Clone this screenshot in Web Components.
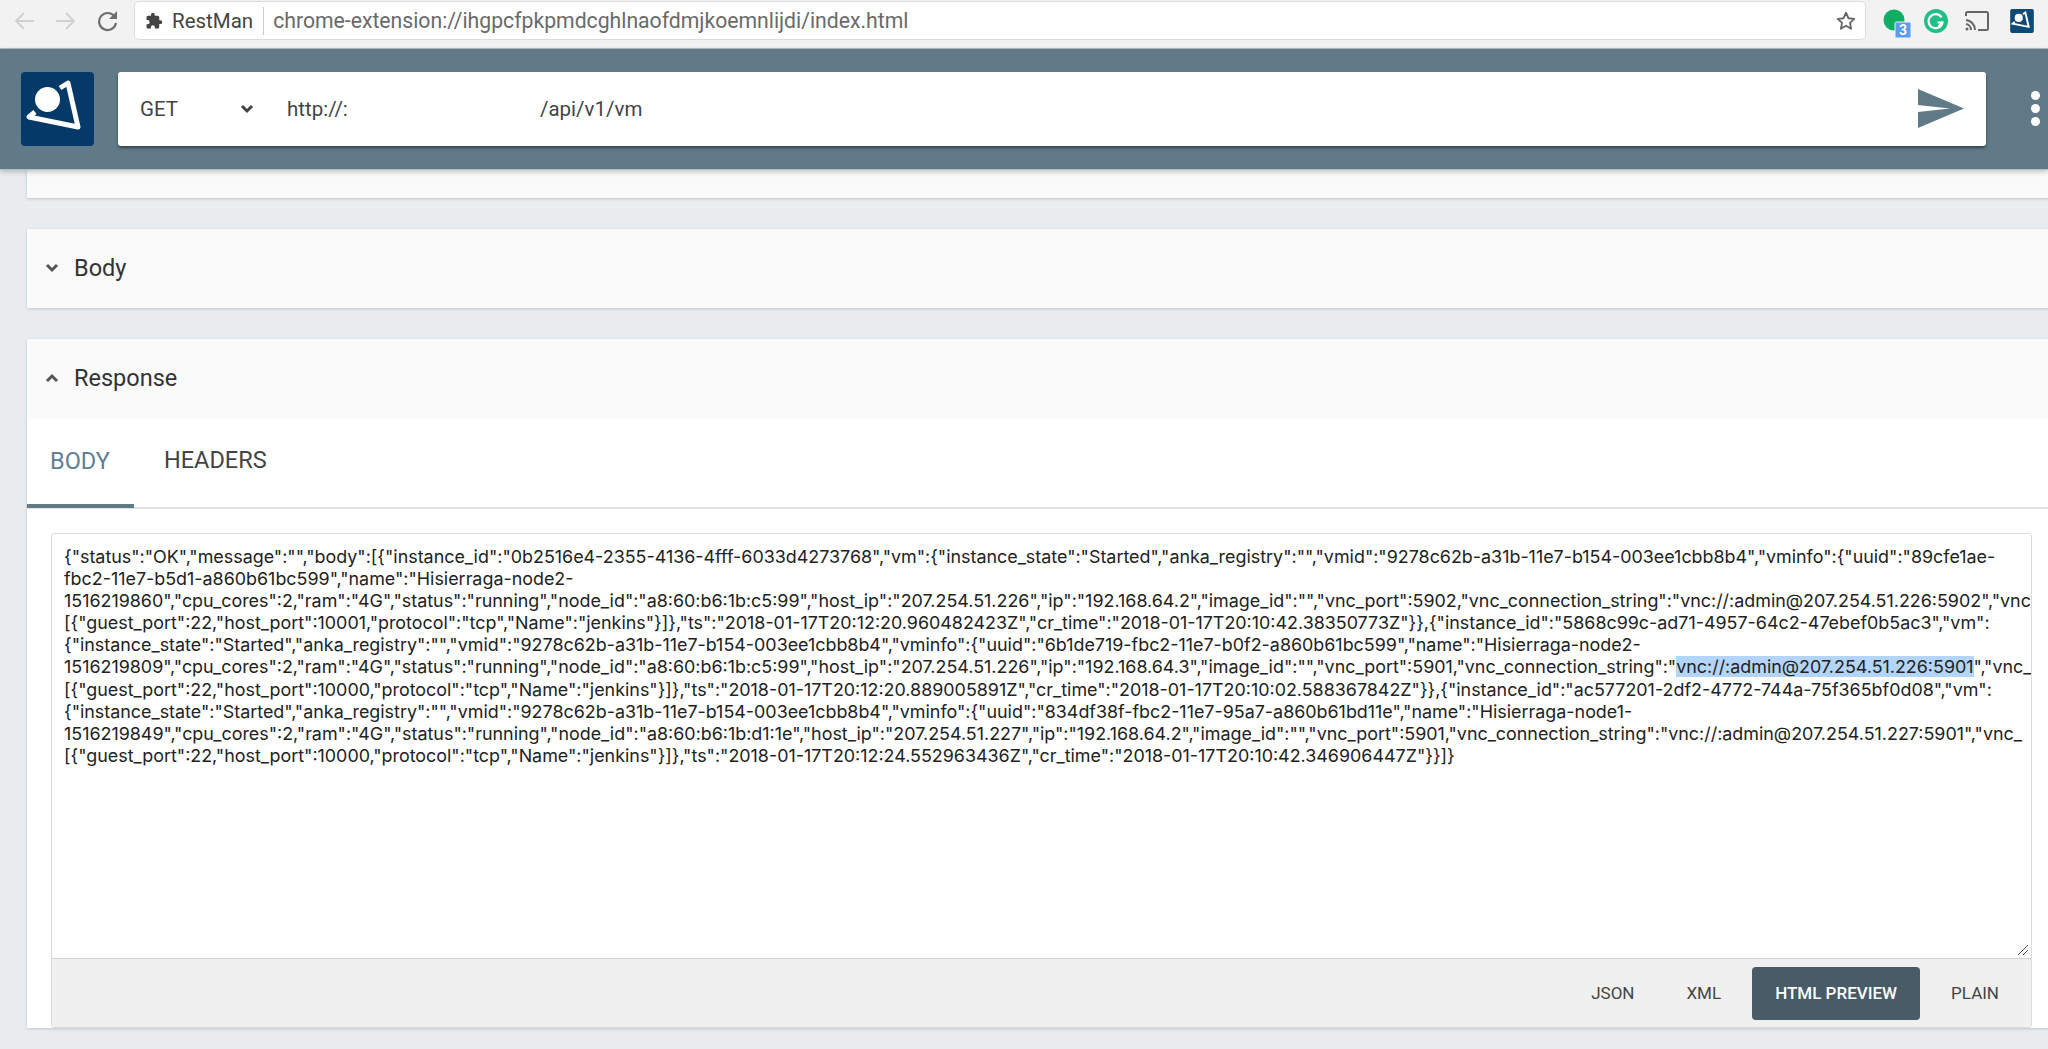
<!DOCTYPE html>
<html>
<head>
<meta charset="utf-8">
<style>
  html, body { margin: 0; height: 100%; overflow: hidden; }
  body { background: #e9edf0; font-family: Roboto, "Liberation Sans", sans-serif; color: #333; }
</style>
</head>
<body>
<browser-bar></browser-bar>
<app-bar></app-bar>
<main-area>
  <stub-panel></stub-panel>
  <fold-panel label="Body"></fold-panel>
  <fold-panel label="Response" opened>
    <response-view></response-view>
  </fold-panel>
</main-area>

<script>
class BrowserBar extends HTMLElement {
  constructor() {
    super();
    this.attachShadow({ mode: "open" });
    this.shadowRoot.innerHTML = `
      <style>
        :host { display: flex; align-items: center; height: 49px; padding-bottom: 7px; background: #f2f2f2; border-bottom: 1px solid #b9bdbf; box-sizing: border-box; }
        .nav { display: flex; align-items: center; width: 134px; flex: none; padding-left: 14px; box-sizing: border-box; gap: 22px; }
        .omni { flex: none; width: 1732px; height: 39px; box-sizing: border-box; background: #fff; border: 1px solid #dcdcdc; border-radius: 5px; display: flex; align-items: center; padding: 0 8px 0 10px; font-size: 20.500px; }
        .name { color: #444; margin-left: 9px; padding-right: 10px; border-right: 1px solid #ccc; line-height: 28px; }
        .url { color: #6a6a6a; margin-left: 9px; flex: 1; font-size: 21.200px; }
        .exts { display: flex; align-items: center; margin-left: 17px; gap: 14px; }
        svg { display: block; }
      </style>
      <div class="nav">
        <svg width="20" height="20" viewBox="0 0 20 20" fill="none" stroke="#d0d0d0" stroke-width="1.800"><path d="M20 10H2M10 2l-8 8 8 8"/></svg>
        <svg width="20" height="20" viewBox="0 0 20 20" fill="none" stroke="#d0d0d0" stroke-width="1.800"><path d="M0 10h18M10 2l8 8-8 8"/></svg>
        <svg width="21" height="22" viewBox="0 0 21 22" fill="none" stroke="#6e6e6e" stroke-width="2.200" style="margin-left:-1px"><path d="M17.500 6.500A8.500 8.500 0 1 0 19 13"/><path d="M20 1v8h-8z" fill="#6e6e6e" stroke="none"/></svg>
      </div>
      <div class="omni">
        <svg width="18" height="18" viewBox="0 0 24 24" fill="#444"><path d="M20.500 11H19V7a2 2 0 0 0-2-2h-4V3.500a2.500 2.500 0 0 0-5 0V5H4a2 2 0 0 0-2 2v3.800h1.500a2.700 2.700 0 0 1 0 5.400H2V20a2 2 0 0 0 2 2h3.800v-1.500a2.700 2.700 0 0 1 5.400 0V22H17a2 2 0 0 0 2-2v-4h1.500a2.500 2.500 0 0 0 0-5z"/></svg>
        <span class="name">RestMan</span>
        <span class="url">chrome-extension://ihgpcfpkpmdcghlnaofdmjkoemnlijdi/index.html</span>
        <svg width="22" height="22" viewBox="0 0 24 24" fill="none" stroke="#666" stroke-width="2" stroke-linejoin="round"><path d="M12 3l2.700 6 6.300.7-4.700 4.300 1.300 6.500L12 17.200 6.400 20.500 7.700 14 3 9.700 9.300 9z"/></svg>
      </div>
      <div class="exts">
        <svg width="30" height="30" viewBox="0 0 30 30" style="margin-top:6px"><circle cx="11" cy="11" r="10.500" fill="#0fae63"/><rect x="12" y="13" width="16" height="16" rx="1.500" fill="#5a9cf6" stroke="#f2f2f2"/><text x="20" y="26" font-family="Roboto, sans-serif" font-size="14" font-weight="700" fill="#fff" text-anchor="middle">3</text></svg>
        <svg width="24" height="24" viewBox="0 0 24 24" style="margin-left:-3px"><circle cx="12" cy="12" r="12" fill="#1fbf86"/><path d="M17.500 8.300A7 7 0 1 0 18.500 13.500H13.500" fill="none" stroke="#fff" stroke-width="2.200"/><path d="M14 18l4.500-5" stroke="#fff" stroke-width="2" fill="none"/></svg>
        <svg width="24" height="20" viewBox="0 0 24 20" fill="none" stroke="#666" stroke-width="2" style="margin-left:3px"><path d="M1 5V2.500A1.500 1.500 0 0 1 2.500 1H21.500A1.500 1.500 0 0 1 23 2.500V17.500A1.500 1.500 0 0 1 21.500 19H13"/><path d="M1 9a10 10 0 0 1 9 10M1 13a6 6 0 0 1 5 6"/><circle cx="2" cy="18" r="1.500" fill="#666" stroke="none"/></svg>
        <svg width="24" height="24" viewBox="0 0 73 74" style="margin-left:7px"><rect width="73" height="74" rx="6" fill="#0e4a78"/><circle cx="26.500" cy="27.500" r="12.500" fill="#fff"/><path d="M14 40L8 45L57 55L47 11L39 16" fill="none" stroke="#fff" stroke-width="6"/></svg>
      </div>
    `;
  }
}

class AppBar extends HTMLElement {
  constructor() {
    super();
    this.attachShadow({ mode: "open" });
    this.shadowRoot.innerHTML = `
      <style>
        :host { display: flex; position: relative; z-index: 2; align-items: center; height: 121px; background: #607a88; box-shadow: 0 2px 5px rgba(0,0,0,.22); padding: 0 0 1px 21px; box-sizing: border-box; border-bottom: 1px solid #b4bfc5; }
        .logo { flex: none; width: 73px; height: 74px; background: #053a68; border-radius: 4px; display: flex; }
        .field { flex: none; width: 1868px; height: 74px; margin-left: 24px; background: #fff; border-radius: 3px; box-shadow: 0 2px 3px rgba(0,0,0,.45); display: flex; align-items: center; font-size: 20.500px; color: #444; box-sizing: border-box; }
        .method { width: 120px; margin-left: 22px; display: flex; align-items: center; justify-content: space-between; padding-right: 6px; box-sizing: border-box; }
        .http { margin-left: 27px; width: 60px; overflow: hidden; white-space: nowrap; }
        .path { margin-left: 193px; flex: 1; }
        .send { margin-right: 22px; }
        .dots { display: flex; flex-direction: column; gap: 4px; margin-left: 45px; }
        .dots i { display: block; width: 9px; height: 9px; background: #fff; border-radius: 50%; }
        svg { display: block; }
      </style>
      <div class="logo">
        <svg width="73" height="74" viewBox="0 0 73 74">
          <circle cx="26.500" cy="27.500" r="12.500" fill="#fff"/>
          <path d="M14 40L8 45L57 55L47 11L39 16" fill="none" stroke="#fff" stroke-width="5" stroke-linejoin="round"/>
        </svg>
      </div>
      <div class="field">
        <div class="method"><span>GET</span><svg width="14" height="10" viewBox="0 0 14 10" fill="none" stroke="#444" stroke-width="3"><path d="M2 2l5 5 5-5"/></svg></div>
        <div class="http">http://:</div>
        <div class="path">/api/v1/vm</div>
        <svg class="send" width="46" height="39" viewBox="0 0 46 39" fill="#607a88"><path d="M0 0L46 19.500 0 39V23L32 19.500 0 16z"/></svg>
      </div>
      <div class="dots"><i></i><i></i><i></i></div>
    `;
  }
}

class MainArea extends HTMLElement {
  constructor() {
    super();
    this.attachShadow({ mode: "open" });
    this.shadowRoot.innerHTML = `
      <style>
        :host { display: flex; flex-direction: column; gap: 31px; padding-left: 27px; margin-right: -20px; }
      </style>
      <slot></slot>
    `;
  }
}

class StubPanel extends HTMLElement {
  constructor() {
    super();
    this.attachShadow({ mode: "open" });
    this.shadowRoot.innerHTML = `
      <style>
        :host { display: block; height: 28px; background: #fafafa; box-shadow: 0 1px 3px rgba(0,0,0,.18); }
      </style>
    `;
  }
}

class FoldPanel extends HTMLElement {
  static get observedAttributes() {
    return ["label"];
  }

  constructor() {
    super();
    this.attachShadow({ mode: "open" });
    this.shadowRoot.innerHTML = `
      <style>
        :host { display: block; background: #fff; box-shadow: 0 1px 3px rgba(0,0,0,.18); }
        header { display: flex; align-items: center; height: 79px; background: #fafafa; font-size: 23.500px; color: #333; padding-left: 18px; padding-bottom: 2px; box-sizing: border-box; }
        :host([opened]) header { height: 80px; }
        svg { display: block; margin-right: 15px; }
        :host([opened]) svg { transform: rotate(180deg); }
      </style>
      <header>
        <svg width="14" height="10" viewBox="0 0 14 10" fill="none" stroke="#555" stroke-width="3"><path d="M2 2l5 5 5-5"/></svg>
        <span id="label"></span>
      </header>
      <slot></slot>
    `;
  }

  attributeChangedCallback(name, oldValue, newValue) {
    if (name === "label") {
      this.shadowRoot.querySelector("#label").textContent = newValue;
    }
  }
}

class ResponseView extends HTMLElement {
  constructor() {
    super();
    this.attachShadow({ mode: "open" });
    this.shadowRoot.innerHTML = `
      <style>
        :host { display: block; background: #fff; }
        .tabs { display: flex; height: 90px; border-bottom: 2px solid #e3e3e3; box-sizing: border-box; font-size: 23.500px; }
        .tab { display: flex; align-items: center; padding: 0 24px 6px 24px; box-sizing: border-box; color: #444; }
        .tab.on { color: #5f7f95; border-bottom: 4px solid #607a88; margin-bottom: -1px; padding: 0 23px 2px 23px; width: 107px; }
        .tab + .tab { padding-left: 30px; }
        .box { margin: 24px 36px 0 24px; width: 1981px; border: 1px solid #dcdcdc; border-radius: 3px; box-sizing: border-box; }
        .text { position: relative; height: 424px; padding: 12px 0 0 12px; box-sizing: border-box; overflow: hidden; font-family: Inter, Roboto, sans-serif; font-size: 17.900px; line-height: 22.100px; color: #222; white-space: pre; }
        .text div { overflow: hidden; }
        mark { background: #b4d5fb; color: inherit; }
        .grip { position: absolute; right: 2px; bottom: 2px; }
        .foot { display: flex; align-items: center; justify-content: flex-end; height: 69px; background: #f0f0f0; border-top: 1px solid #d4d4d4; box-sizing: border-box; font-size: 17px; color: #444; padding-right: 6px; }
        .btn { display: flex; align-items: center; justify-content: center; height: 53px; padding: 0 26px; border-radius: 4px; }
        .btn.on { background: #485c68; color: #fff; margin: 0 5px 0 5px; width: 168px; box-sizing: border-box; padding: 0; font-weight: 500; }
        svg { display: block; }
      </style>
      <div class="tabs">
        <div class="tab on">BODY</div>
        <div class="tab">HEADERS</div>
      </div>
      <div class="box">
        <div class="text"><div>{"status":"OK","message":"","body":[{"instance_id":"0b2516e4-2355-4136-4fff-6033d4273768","vm":{"instance_state":"Started","anka_registry":"","vmid":"9278c62b-a31b-11e7-b154-003ee1cbb8b4","vminfo":{"uuid":"89cfe1ae-</div><div>fbc2-11e7-b5d1-a860b61bc599","name":"Hisierraga-node2-</div><div>1516219860","cpu_cores":2,"ram":"4G","status":"running","node_id":"a8:60:b6:1b:c5:99","host_ip":"207.254.51.226","ip":"192.168.64.2","image_id":"","vnc_port":5902,"vnc_connection_string":"vnc://:admin@207.254.51.226:5902","vnc_</div><div>[{"guest_port":22,"host_port":10001,"protocol":"tcp","Name":"jenkins"}]},"ts":"2018-01-17T20:12:20.960482423Z","cr_time":"2018-01-17T20:10:42.38350773Z"}},{"instance_id":"5868c99c-ad71-4957-64c2-47ebef0b5ac3","vm":</div><div>{"instance_state":"Started","anka_registry":"","vmid":"9278c62b-a31b-11e7-b154-003ee1cbb8b4","vminfo":{"uuid":"6b1de719-fbc2-11e7-b0f2-a860b61bc599","name":"Hisierraga-node2-</div><div>1516219809","cpu_cores":2,"ram":"4G","status":"running","node_id":"a8:60:b6:1b:c5:99","host_ip":"207.254.51.226","ip":"192.168.64.3","image_id":"","vnc_port":5901,"vnc_connection_string":"<mark>vnc://:admin@207.254.51.226:5901</mark>","vnc_</div><div>[{"guest_port":22,"host_port":10000,"protocol":"tcp","Name":"jenkins"}]},"ts":"2018-01-17T20:12:20.889005891Z","cr_time":"2018-01-17T20:10:02.588367842Z"}},{"instance_id":"ac577201-2df2-4772-744a-75f365bf0d08","vm":</div><div>{"instance_state":"Started","anka_registry":"","vmid":"9278c62b-a31b-11e7-b154-003ee1cbb8b4","vminfo":{"uuid":"834df38f-fbc2-11e7-95a7-a860b61bd11e","name":"Hisierraga-node1-</div><div>1516219849","cpu_cores":2,"ram":"4G","status":"running","node_id":"a8:60:b6:1b:d1:1e","host_ip":"207.254.51.227","ip":"192.168.64.2","image_id":"","vnc_port":5901,"vnc_connection_string":"vnc://:admin@207.254.51.227:5901","vnc_</div><div>[{"guest_port":22,"host_port":10000,"protocol":"tcp","Name":"jenkins"}]},"ts":"2018-01-17T20:12:24.552963436Z","cr_time":"2018-01-17T20:10:42.346906447Z"}}]}</div>
          <svg class="grip" width="12" height="12" viewBox="0 0 12 12" stroke="#555" stroke-width="1"><path d="M1 11L11 1M6 11l5-5"/></svg>
        </div>
        <div class="foot">
          <div class="btn">JSON</div>
          <div class="btn">XML</div>
          <div class="btn on">HTML PREVIEW</div>
          <div class="btn">PLAIN</div>
        </div>
      </div>
    `;
  }
}

customElements.define("browser-bar", BrowserBar);
customElements.define("app-bar", AppBar);
customElements.define("main-area", MainArea);
customElements.define("stub-panel", StubPanel);
customElements.define("fold-panel", FoldPanel);
customElements.define("response-view", ResponseView);
</script>
</body>
</html>
